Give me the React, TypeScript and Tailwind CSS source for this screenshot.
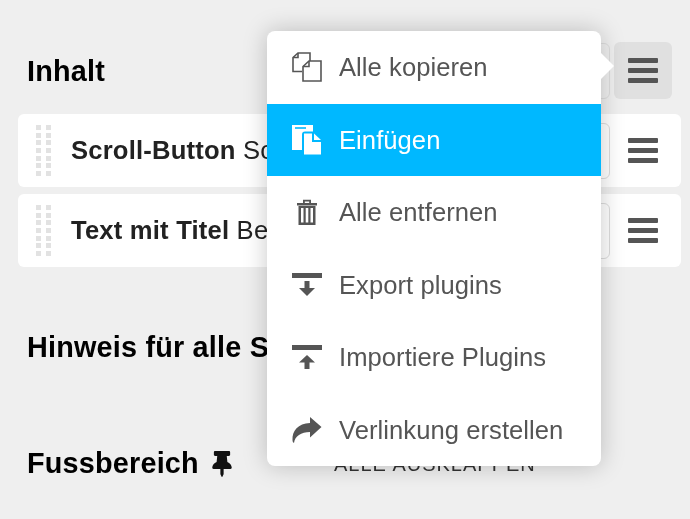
import { FaThumbtack } from "react-icons/fa";

function Burger() {
  return (
    <div className="flex w-[30px] flex-col gap-[5px]">
      <span className="h-[5px] rounded-[1px] bg-[#555]" />
      <span className="h-[5px] rounded-[1px] bg-[#555]" />
      <span className="h-[5px] rounded-[1px] bg-[#555]" />
    </div>
  );
}

function Handle() {
  return (
    <div className="grid grid-cols-2 gap-x-[5px] gap-y-[2.67px]">
      {Array.from({ length: 14 }).map((_, i) => (
        <span key={i} className="h-[5px] w-[5px] bg-[#e2e2e2]" />
      ))}
    </div>
  );
}

function Row({ title, rest }: { title: string; rest: string }) {
  return (
    <div className="flex h-[73px] items-center rounded-[6px] bg-white pl-[18px] pr-[23px]">
      <Handle />
      <div className="ml-[20px] flex-1 whitespace-nowrap text-[25.6px] tracking-[0.2px] text-[#222]">
        <b>{title}</b> {rest}
      </div>
      <div className="mr-[18px] h-[56px] w-[60px] rounded-[6px] border border-[#ddd]" />
      <Burger />
    </div>
  );
}

const CopyIcon = (
  <svg width="30" height="30" viewBox="0 0 30 30" fill="none" stroke="#555" strokeWidth="1.6">
    <path d="M10 19.5H1V5.5L6 1h12v8" />
    <path d="M1 5.5h5V1" />
    <path d="M17 9h12v20H11V14.5z" />
    <path d="M11 14.5h6V9" />
  </svg>
);

const PasteIcon = (
  <svg width="30" height="30" viewBox="0 0 30 30" fill="#fff">
    <path d="M0 0h21v6.5h-8a3 3 0 0 0-3 3V25H0z" />
    <path d="M12 8.5h8V17h9v12.5H12z" />
    <path d="M22 8.5l7 6.5h-7z" />
    <path d="M3 2.2h11v1.6H3z" fill="#00b8ff" />
  </svg>
);

const TrashIcon = (
  <svg width="20" height="26" viewBox="0 0 20 26" fill="#555">
    <path d="M0 4h20v2.5H0z" />
    <path d="M6 4V0.8h8V4h-1.8V2.4H7.8V4z" />
    <path fillRule="evenodd" d="M1.5 7h17v19h-17zM4 9v14.5h2.5V9zm4.700 0v14.5h2.600V9zm4.800 0v14.5H16V9z" />
  </svg>
);

const ExportIcon = (
  <svg width="30" height="26" viewBox="0 0 30 26" fill="#555">
    <path d="M0 1h30v5H0z" />
    <path d="M12.500 9h5v7h5.500l-8 8-8-8h5.500z" />
  </svg>
);

const ImportIcon = (
  <svg width="30" height="26" viewBox="0 0 30 26" fill="#555">
    <path d="M0 1h30v5H0z" />
    <path d="M15 11l8 7.500h-5.500V25h-5v-6.500H7z" />
  </svg>
);

const ShareIcon = (
  <svg width="30" height="26" viewBox="0 0 30 26" fill="#555">
    <path d="M29.500 10 18 0v6C6 6.500 0 14 0.500 23c0 1.500 0.500 2.500 1.500 3C3 19 9 15 18 15v5.500z" />
  </svg>
);

const items = [
  { label: "Alle kopieren", icon: CopyIcon },
  { label: "Einfügen", icon: PasteIcon, active: true },
  { label: "Alle entfernen", icon: TrashIcon },
  { label: "Export plugins", icon: ExportIcon },
  { label: "Importiere Plugins", icon: ImportIcon },
  { label: "Verlinkung erstellen", icon: ShareIcon },
];

export default function App() {
  return (
    <div
      className="relative h-[519px] w-[690px] overflow-hidden bg-[#efefef] pl-[18px] pr-[9px] pt-[42px] blur-[0.4px]"
      style={{ fontFamily: '"Liberation Sans", Arial, sans-serif' }}
    >
      <div className="flex h-[57px] items-center">
        <h2 className="ml-[9px] flex-1 pt-[2px] text-[28.8px] font-bold tracking-[0.2px] text-black">Inhalt</h2>
        <div className="mr-[4px] h-[56px] w-[60px] rounded-[6px] border border-[#ddd]" />
        <div className="mr-[9px] flex h-[57px] w-[58px] items-center justify-center rounded-[6px] bg-[#e0e0e0]">
          <Burger />
        </div>
      </div>

      <div className="mt-[15px] flex flex-col gap-[7px]">
        <Row title="Scroll-Button" rest="Scroll nach oben" />
        <Row title="Text mit Titel" rest="Beschreibung" />
      </div>

      <h2 className="ml-[9px] mt-[63px] whitespace-nowrap text-[28.8px] font-bold leading-[34px] tracking-[0.2px] text-black">
        Hinweis für alle Seiten
      </h2>

      <div className="ml-[9px] mt-[83px] flex h-[34px] items-center">
        <h2 className="flex w-[307px] items-center gap-[10px] text-[28.8px] font-bold tracking-[0.2px] text-black">
          Fussbereich <FaThumbtack size={26} color="#111" />
        </h2>
        <span className="whitespace-nowrap text-[20px] tracking-[1px] text-[#333]">ALLE AUSKLAPPEN</span>
      </div>

      <div className="absolute left-[267px] top-[31px] w-[334px] rounded-[8px] bg-white shadow-[0_0_24px_rgba(0,0,0,0.22)]">
        <span className="absolute left-full top-[22px] h-0 w-0 border-y-[13px] border-l-[13px] border-y-transparent border-l-white" />
        {items.map((it) => (
          <div
            key={it.label}
            className={`flex h-[72.5px] items-center text-[25.6px] tracking-[0.05px] ${
              it.active ? "bg-[#00b8ff] text-white" : "text-[#555]"
            }`}
          >
            <span className="flex w-[72px] items-center justify-center pl-[8px]">{it.icon}</span>
            <span className="whitespace-nowrap">{it.label}</span>
          </div>
        ))}
      </div>
    </div>
  );
}
